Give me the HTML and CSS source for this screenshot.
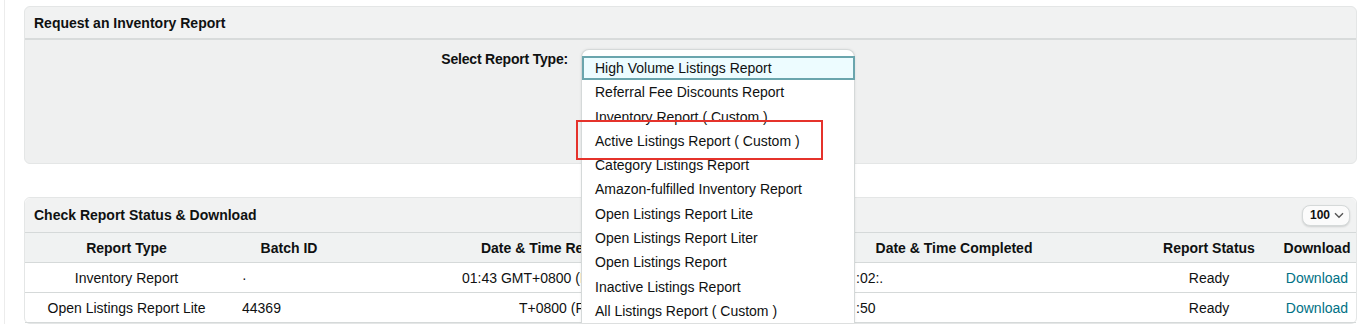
FILE: index.html
```html
<!DOCTYPE html>
<html>
<head>
  <title>Inventory Reports</title>
  <link rel="stylesheet" href="styles.css">
</head>
<body>
  <div class="page">

    <!-- request panel -->
    <div class="panel">
      <div class="panel-head">Request an Inventory Report</div>
      <div class="request-body">
        <div class="field-label">Select Report Type:</div>
        <div class="picker">
          <ul class="options">
            <li class="option selected">High Volume Listings Report</li>
            <li class="option">Referral Fee Discounts Report</li>
            <li class="option">Inventory Report ( Custom )</li>
            <li class="option">Active Listings Report ( Custom )</li>
            <li class="option">Category Listings Report</li>
            <li class="option">Amazon-fulfilled Inventory Report</li>
            <li class="option">Open Listings Report Lite</li>
            <li class="option">Open Listings Report Liter</li>
            <li class="option">Open Listings Report</li>
            <li class="option">Inactive Listings Report</li>
            <li class="option">All Listings Report ( Custom )</li>
          </ul>
          <!-- highlight box drawn over the menu -->
          <div class="mark"></div>
        </div>
      </div>
    </div>

    <!-- status panel -->
    <div class="panel status">
      <div class="panel-head status-head">
        <span>Check Report Status &amp; Download</span>
        <button class="page-size">100
          <svg width="10" height="7" viewBox="0 0 10 7"><path d="M1 1.2 L5 5.2 L9 1.2" fill="none" stroke="#555" stroke-width="1.4"/></svg>
        </button>
      </div>
      <table class="reports">
        <colgroup>
          <col class="c-type">
          <col class="c-batch">
          <col class="c-req">
          <col class="c-done">
          <col class="c-status">
          <col>
        </colgroup>
        <thead>
          <tr>
            <th>Report Type</th>
            <th>Batch ID</th>
            <th>Date &amp; Time Requested</th>
            <th>Date &amp; Time Completed</th>
            <th>Report Status</th>
            <th>Download</th>
          </tr>
        </thead>
        <tbody>
          <tr>
            <td>Inventory Report</td>
            <td class="left">&middot;</td>
            <td class="req">01:43 GMT+0800 (PDT)</td>
            <td class="done">:02:.</td>
            <td>Ready</td>
            <td><a href="#">Download</a></td>
          </tr>
          <tr>
            <td>Open Listings Report Lite</td>
            <td class="left">44369</td>
            <td class="req req-2">T+0800 (PDT)</td>
            <td class="done">:50</td>
            <td>Ready</td>
            <td><a href="#">Download</a></td>
          </tr>
        </tbody>
      </table>
    </div>

  </div>
</body>
</html>
```

FILE: styles.css
```css
body {
  margin: 0;
  background: #fff;
  font-family: "Liberation Sans", Arial, sans-serif;
  font-size: 14px;
  color: #0f1111;
}

.page {
  margin-left: 4px;
  border-left: 1px solid #ececec;
  padding: 6px 2px 0 19px;
  height: 318px;
  overflow: hidden;
}

.panel {
  background: #eff0f0;
  border: 1px solid #e4e6e6;
  border-radius: 6px;
}

.panel-head {
  height: 31px;
  padding-left: 9px;
  display: flex;
  align-items: center;
  font-weight: bold;
  background: #f1f2f2;
  border-bottom: 2px solid #d8dbdb;
  border-radius: 6px 6px 0 0;
}

.request-body {
  height: 123px;
  display: grid;
  grid-template-columns: 543px 274px;
  column-gap: 13px;
  align-items: start;
  padding-top: 10px;
  box-sizing: border-box;
}

.field-label {
  text-align: right;
  font-weight: bold;
  line-height: 18px;
  letter-spacing: -0.2px;
}

.picker {
  position: relative;
  height: 1px;
}

.options {
  position: absolute;
  top: -1px;
  left: 0;
  width: 274px;
  margin: 0;
  padding: 6px 0 0;
  list-style: none;
  background: #fff;
  border: 1px solid #d5d9d9;
  border-bottom: none;
  border-radius: 8px 8px 0 0;
  box-sizing: border-box;
  box-shadow: 0 0 3px rgba(0, 0, 0, 0.08);
  z-index: 2;
}

.option {
  height: 24.3px;
  line-height: 24.3px;
  padding-left: 13px;
  white-space: nowrap;
}

.option.selected {
  background: #edfcff;
  border: 2px solid #6aa5ad;
  height: 20.3px;
  line-height: 20.3px;
  padding-left: 11px;
  margin-right: -1px;
}

.mark {
  position: absolute;
  left: -5px;
  top: 70px;
  width: 247px;
  height: 40px;
  border: 2px solid #e5322b;
  box-sizing: border-box;
  z-index: 3;
}

.status {
  margin-top: 33px;
  background: #fff;
}

.status-head {
  height: 34px;
  border-bottom: 1px solid #d5d9d9;
  justify-content: space-between;
  padding-right: 6px;
}

.page-size {
  display: flex;
  align-items: center;
  gap: 4px;
  height: 21px;
  padding: 0 5px 0 7px;
  font-family: inherit;
  font-size: 12px;
  font-weight: bold;
  color: #0f1111;
  background: #fbfbfb;
  border: 1px solid #d5d9d9;
  border-radius: 8px;
  box-shadow: 0 1px 2px rgba(15, 17, 17, 0.15);
}

.reports {
  width: 100%;
  border-collapse: collapse;
  table-layout: fixed;
}

.c-type { width: 203px; }
.c-batch { width: 122px; }
.c-req { width: 418px; }
.c-done { width: 372px; }
.c-status { width: 138px; }

.reports th,
.reports td {
  height: 29px;
  padding: 0;
  text-align: center;
  white-space: nowrap;
  overflow: hidden;
  border-bottom: 1px solid #d5d9d9;
}

.reports th {
  font-weight: bold;
  background: #f0f2f2;
}

.reports td.left {
  text-align: left;
  padding-left: 14px;
}

.reports td.req {
  text-align: left;
  padding-left: 112px;
}

.reports td.req-2 {
  padding-left: 169px;
}

.reports td.done {
  text-align: left;
  padding-left: 88px;
}

.reports a {
  color: #007185;
  text-decoration: none;
}
```
